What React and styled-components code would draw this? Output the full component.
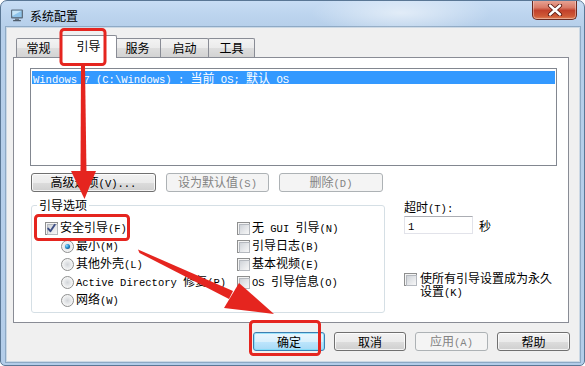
import React from "react";
import styled, { createGlobalStyle, css } from "styled-components";

const Global = createGlobalStyle`
  html, body { margin: 0; padding: 0; background: #ffffff; }
  body {
    font-family: "Noto Sans CJK SC", "Noto Sans", sans-serif;
    font-size: 12px;
    color: #000;
  }
  * { box-sizing: border-box; }
`;

const Half = styled.span`
  font-family: "Liberation Mono", "DejaVu Sans Mono", monospace;
  font-size: 10.5px;
`;

const Label = styled.span`
  white-space: pre;
`;

function T({ children }) {
  const parts = String(children).split(/([\x20-\x7e]+)/).filter(Boolean);
  return (
    <Label>
      {parts.map((p, i) =>
        /[\x20-\x7e]/.test(p) ? <Half key={i}>{p}</Half> : <React.Fragment key={i}>{p}</React.Fragment>
      )}
    </Label>
  );
}

const Window = styled.div`
  position: relative;
  width: 585px;
  height: 366px;
  display: flex;
  flex-direction: column;
  border: 1px solid #5a7795;
  border-radius: 7px 7px 5px 5px;
  overflow: hidden;
  background:
    radial-gradient(ellipse 90px 22px at 400px 12px, rgba(255,255,255,0.55), rgba(255,255,255,0)),
    linear-gradient(180deg, #c8ddf4 0px, #bcd4ee 14px, #b6cfea 27px, #b3cde9 100%);
`;

const TitleBar = styled.div`
  height: 27px;
  flex: none;
  display: flex;
  align-items: flex-start;
`;

const AppIcon = styled.svg`
  margin: 7px 0 0 9px;
  flex: none;
`;

const Title = styled.div`
  margin: 8px 0 0 6px;
  line-height: 14px;
  font-size: 12px;
  color: #000;
`;

const Close = styled.div`
  margin-left: auto;
  margin-right: 7px;
  margin-top: -1px;
  width: 45px;
  height: 20px;
  border: 1px solid #6b2a20;
  border-top: none;
  border-radius: 0 0 5px 5px;
  background: linear-gradient(180deg, #e9a899 0%, #d97a66 40%, #c2412b 55%, #cf5a36 85%, #e0825a 100%);
  box-shadow: inset 0 0 0 1px rgba(255,255,255,0.35);
  display: flex;
  align-items: center;
  justify-content: center;
`;

const Client = styled.div`
  flex: 1;
  margin: 0 5px 4px 6px;
  background: #f0f0f0;
  box-shadow: 0 0 0 1px rgba(255,255,255,0.55), 0 0 0 2px rgba(70,100,130,0.35);
  display: flex;
  flex-direction: column;
`;

const TabStrip = styled.div`
  height: 29px;
  flex: none;
  display: flex;
  align-items: flex-end;
  padding-left: 9px;
`;

const Tab = styled.div`
  width: ${(p) => p.$w}px;
  height: 19px;
  flex: none;
  border: 1px solid #898c95;
  border-bottom: none;
  border-radius: 2px 2px 0 0;
  background: linear-gradient(180deg, #f3f3f3 0%, #ebebeb 50%, #dedede 50%, #d3d3d3 100%);
  display: flex;
  align-items: center;
  justify-content: center;
  line-height: 12px;
  & + & { margin-left: -1px; }
  ${(p) =>
    p.$active &&
    css`
      position: relative;
      z-index: 1;
      height: 23px;
      background: #ffffff;
      padding-bottom: 3px;
      && { margin: 0 -2px -1px -3px; }
    `}
`;

const Panel = styled.div`
  height: 266px;
  flex: none;
  margin: 0 10px 0 6px;
  border: 1px solid #898c95;
  background: #ffffff;
  padding: 10px 0 0 16px;
  display: flex;
  flex-direction: column;
  align-items: flex-start;
`;

const ListBox = styled.div`
  width: 527px;
  height: 98px;
  border: 1px solid #828790;
  background: #fff;
  padding: 2px 1px;
`;

const ListItem = styled.div`
  height: 13px;
  line-height: 13px;
  padding-left: 1px;
  white-space: nowrap;
  background: ${(p) => (p.$selected ? "#3399ff" : "transparent")};
  color: ${(p) => (p.$selected ? "#ffffff" : "#000")};
`;

const ActionRow = styled.div`
  display: flex;
  gap: 10px;
  margin: 7px 0 0 1px;
`;

const Button = styled.button`
  width: ${(p) => p.$w}px;
  height: 19px;
  flex: none;
  padding: 0;
  font: inherit;
  line-height: 12px;
  display: flex;
  align-items: center;
  justify-content: center;
  color: #000;
  border: 1px solid #707070;
  border-radius: 3px;
  background: linear-gradient(180deg, #f2f2f2 0%, #ebebeb 50%, #dddddd 50%, #cfcfcf 100%);
  box-shadow: inset 0 0 0 1px rgba(255,255,255,0.75);
  ${(p) =>
    p.$disabled &&
    css`
      border-color: #adb2b5;
      background: #f4f4f4;
      box-shadow: none;
      color: #838383;
    `}
  ${(p) =>
    p.$primary &&
    css`
      border-color: #3c7fb1;
      background: linear-gradient(180deg, #eaf6fd 0%, #d9f0fc 50%, #bee6fd 50%, #a7d9f5 100%);
      box-shadow: inset 0 0 0 1px rgba(120, 220, 250, 0.7);
    `}
`;

const Lower = styled.div`
  display: flex;
  align-items: flex-start;
  margin: 7px 0 0 1px;
`;

const Group = styled.fieldset`
  width: 354px;
  margin: 0;
  padding: 0;
  min-inline-size: 0;
  border: 1px solid #d5dfe5;
  border-radius: 3px;
`;

const Legend = styled.legend`
  padding: 0 2px;
  margin-left: 5px;
  line-height: 12px;
  font-size: 12px;
`;

const GroupBody = styled.div`
  display: flex;
  padding: 8px 0 3px 13px;
`;

const Col = styled.div`
  display: flex;
  flex-direction: column;
  width: ${(p) => (p.$w ? `${p.$w}px` : "auto")};
`;

const Row = styled.div`
  height: 18px;
  display: flex;
  align-items: center;
  padding-left: ${(p) => p.$indent || 0}px;
  line-height: 12px;
  white-space: nowrap;
`;

const Check = styled.span`
  position: relative;
  width: 13px;
  height: 13px;
  flex: none;
  border: 1px solid #8e8f8f;
  background: #f4f4f4;
  padding: 1px;
  margin-right: 2px;
  &::before {
    content: "";
    display: block;
    width: 9px;
    height: 9px;
    border: 1px solid #b5b9bf;
    background: linear-gradient(135deg, #cfd3d8 0%, #e4e6e9 50%, #f7f7f7 100%);
  }
`;

const CheckMark = styled.svg`
  position: absolute;
  left: 0;
  top: 0;
`;

const Radio = styled.span`
  position: relative;
  width: 13px;
  height: 13px;
  flex: none;
  border-radius: 50%;
  border: 1px solid #8e8f8f;
  margin-right: 2px;
  background: radial-gradient(circle at 50% 50%, #d2d5d9 0px, #e6e8ea 3px, #f6f6f6 5.5px);
  ${(p) =>
    p.$on &&
    css`
      &::after {
        content: "";
        position: absolute;
        left: 3px;
        top: 3px;
        width: 5px;
        height: 5px;
        border-radius: 50%;
        background: radial-gradient(circle at 35% 35%, #8fe0ff 0px, #2a8fd0 2px, #0f4a78 4px);
      }
    `}
`;

const Side = styled.div`
  display: flex;
  flex-direction: column;
  margin-left: 19px;
  padding-top: 2px;
`;

const SideLabel = styled.div`
  line-height: 12px;
`;

const TimeoutRow = styled.div`
  display: flex;
  align-items: center;
  margin-top: 1px;
`;

const TextBox = styled.div`
  width: 69px;
  height: 18px;
  border: 1px solid #e2e3ea;
  border-top-color: #abadb3;
  background: #fff;
  padding-left: 3px;
  line-height: 16px;
`;

const Unit = styled.span`
  margin-left: 6px;
`;

const Permanent = styled.div`
  display: flex;
  align-items: flex-start;
  margin-top: 39px;
`;

const PermText = styled.div`
  width: 136px;
  line-height: 12.5px;
  margin-top: -1px;
  margin-left: 1px;
  & > span { white-space: normal; }
`;

const Footer = styled.div`
  display: flex;
  justify-content: flex-end;
  gap: 9px;
  margin-top: 9px;
  padding-right: 9px;
`;

const Overlay = styled.svg`
  position: absolute;
  left: -1px;
  top: -1px;
  pointer-events: none;
  z-index: 5;
`;

function CheckBox({ checked }) {
  return (
    <Check>
      {checked && (
        <CheckMark width="11" height="11" viewBox="0 0 11 11">
          <path d="M2.2 5.6 L4.4 8.2 L8.8 1.8" fill="none" stroke="#3d4f86" strokeWidth="1.9" strokeLinecap="round" strokeLinejoin="round" />
        </CheckMark>
      )}
    </Check>
  );
}

const RED = "#e5251f";

export default function App() {
  return (
    <>
      <Global />
      <Window>
        <TitleBar>
          <AppIcon width="14" height="14" viewBox="0 0 14 14">
            <rect x="1" y="1.5" width="12" height="9" rx="1" fill="#5f6f80" />
            <rect x="2.3" y="2.7" width="9.4" height="6.4" fill="#8ec3ea" />
            <path d="M2.3 2.7 L11.7 2.7 L2.3 8" fill="#c6e4f7" />
            <rect x="5" y="10.5" width="4" height="1.6" fill="#6c7a88" />
            <rect x="3" y="12" width="8" height="1.3" rx="0.6" fill="#4f5d6b" />
          </AppIcon>
          <Title>系统配置</Title>
          <Close>
            <svg width="16" height="12" viewBox="0 0 16 12">
              <path d="M3 1.5 L13 10.5 M13 1.5 L3 10.5" stroke="#5a1a12" strokeWidth="4.2" strokeLinecap="round" />
              <path d="M3 1.5 L13 10.5 M13 1.5 L3 10.5" stroke="#ffffff" strokeWidth="2.4" strokeLinecap="round" />
            </svg>
          </Close>
        </TitleBar>
        <Client>
          <TabStrip>
            <Tab $w={45}>常规</Tab>
            <Tab $w={57} $active>引导</Tab>
            <Tab $w={47}>服务</Tab>
            <Tab $w={49}>启动</Tab>
            <Tab $w={47}>工具</Tab>
          </TabStrip>
          <Panel>
            <ListBox>
              <ListItem $selected>
                <T>{"Windows 7 (C:\\Windows) : 当前 OS; 默认 OS"}</T>
              </ListItem>
            </ListBox>
            <ActionRow>
              <Button $w={125}><T>高级选项(V)...</T></Button>
              <Button $w={103} $disabled><T>设为默认值(S)</T></Button>
              <Button $w={104} $disabled><T>删除(D)</T></Button>
            </ActionRow>
            <Lower>
              <Group>
                <Legend>引导选项</Legend>
                <GroupBody>
                  <Col $w={192}>
                    <Row><CheckBox checked /><T>安全引导(F)</T></Row>
                    <Row $indent={16}><Radio $on /><T>最小(M)</T></Row>
                    <Row $indent={16}><Radio /><T>其他外壳(L)</T></Row>
                    <Row $indent={16}><Radio /><T>Active Directory 修复(P)</T></Row>
                    <Row $indent={16}><Radio /><T>网络(W)</T></Row>
                  </Col>
                  <Col>
                    <Row><CheckBox /><T>无 GUI 引导(N)</T></Row>
                    <Row><CheckBox /><T>引导日志(B)</T></Row>
                    <Row><CheckBox /><T>基本视频(E)</T></Row>
                    <Row><CheckBox /><T>OS 引导信息(O)</T></Row>
                  </Col>
                </GroupBody>
              </Group>
              <Side>
                <SideLabel><T>超时(T):</T></SideLabel>
                <TimeoutRow>
                  <TextBox><Half>1</Half></TextBox>
                  <Unit>秒</Unit>
                </TimeoutRow>
                <Permanent>
                  <CheckBox />
                  <PermText><T>使所有引导设置成为永久设置(K)</T></PermText>
                </Permanent>
              </Side>
            </Lower>
          </Panel>
          <Footer>
            <Button $w={72} $primary>确定</Button>
            <Button $w={72}>取消</Button>
            <Button $w={73} $disabled><T>应用(A)</T></Button>
            <Button $w={73}>帮助</Button>
          </Footer>
        </Client>
        <Overlay width="585" height="366" viewBox="0 0 585 366">
          <rect x="61" y="29.5" width="44" height="35" rx="3" fill="none" stroke={RED} strokeWidth="3" />
          <rect x="35.5" y="215.5" width="93" height="24" rx="3" fill="none" stroke={RED} strokeWidth="3" />
          <rect x="250.5" y="321.5" width="69" height="33" rx="3" fill="none" stroke={RED} strokeWidth="3" />
          <polygon points="81,66 85,66 86.5,174 80.5,174" fill={RED} />
          <polygon points="71,171 96,171 84.5,199" fill={RED} />
          <polygon points="138,249.5 139.5,253 229,299 233,291" fill={RED} />
          <polygon points="224,308 239,283 274,314" fill={RED} />
        </Overlay>
      </Window>
    </>
  );
}
